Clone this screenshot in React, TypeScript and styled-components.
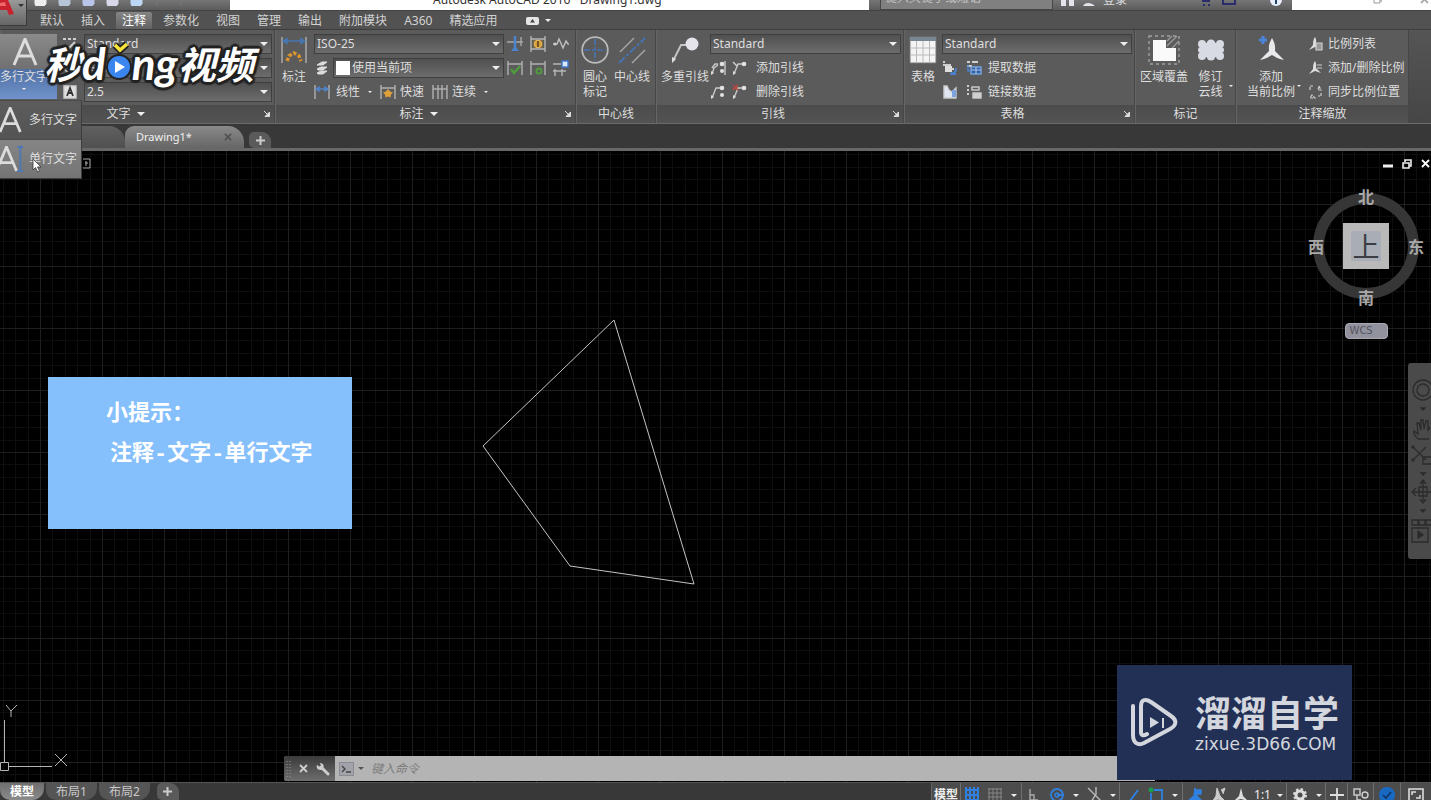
import React from "react";
import styled, { createGlobalStyle, css } from "styled-components";

const Global = createGlobalStyle`
  *, *::before, *::after { box-sizing: border-box; }
  body { margin: 0; background: #000; overflow: hidden; }
  button, input, select { font: inherit; color: inherit; margin: 0; }
  button { background: none; border: 0; padding: 0; cursor: default; white-space: nowrap; }
  svg { display: block; flex: none; }
`;

const Page = styled.div`
  position: relative;
  display: flex;
  flex-direction: column;
  height: 100vh;
  overflow: hidden;
  font: 12px/16px "Noto Sans", "Noto Sans CJK SC", sans-serif;
  color: #dedede;
`;

/* ---------- title bar ---------- */

const TitleBar = styled.header`
  display: flex;
  flex: none;
  height: 10px;
  overflow: hidden;
  background: linear-gradient(#757575, #5c5c5c);
`;

const QuickAccess = styled.div`
  display: flex;
  align-items: flex-end;
  gap: 11px;
  flex: none;
  width: 230px;
  padding: 0 0 4px 34px;
`;

const Caption = styled.h1`
  display: flex;
  align-items: flex-end;
  flex: 1;
  margin: 0;
  padding: 0 0 2px 203px;
  background: #fff;
  color: #333;
  font-size: 12px;
  font-weight: 400;
  line-height: 16px;
  white-space: pre;
`;

const InfoCenter = styled.div`
  display: flex;
  align-items: flex-end;
  flex: none;
  width: 423px;
  padding-left: 11px;
  gap: 8px;
`;

const SearchBox = styled.input`
  width: 173px;
  height: 20px;
  padding: 0 4px 6px;
  border: 1px solid #464646;
  background: #808080;
  font-size: 12px;
  &::placeholder { color: #c4c4c4; font-style: italic; opacity: 1; }
`;

const SignIn = styled.button`
  height: 20px;
  margin-right: 64px;
  line-height: 16px;
`;

const WindowButtons = styled.div`
  display: flex;
  justify-content: flex-end;
  align-items: flex-end;
  gap: 38px;
  flex: none;
  width: 139px;
  padding: 0 2px 6px 0;
  background: #fff;
`;

const AppButton = styled.button`
  position: absolute;
  left: 0;
  top: 0;
  width: 27px;
  height: 26px;
  border: solid #3a3a3a;
  border-width: 0 1px 1px 0;
  background: linear-gradient(#999, #666);
`;

/* ---------- ribbon ---------- */

const TabRow = styled.nav`
  display: flex;
  align-items: stretch;
  flex: none;
  gap: 5px;
  height: 19px;
  padding: 1px 0 0 34px;
  border-top: 1px solid #444;
  background: #525252;
`;

const RibbonTab = styled.button<{ $active?: boolean }>`
  padding: 0 6px;
  line-height: 17px;
  color: #d2d2d2;
  ${(p) =>
    p.$active &&
    css`
      border-radius: 2px 2px 0 0;
      background: linear-gradient(#858585, #636363);
      color: #fff;
    `}
`;

const TabTools = styled.button`
  display: flex;
  align-items: center;
  gap: 6px;
  margin-left: 18px;
`;

const Ribbon = styled.section`
  position: relative;
  display: flex;
  flex: none;
  height: 95px;
  border-top: 1px solid #3d3d3d;
  border-bottom: 1px solid #6a6a6a;
  background: linear-gradient(#555, #464646);
`;

const PanelBox = styled.div<{ $w: number }>`
  display: flex;
  flex-direction: column;
  flex: none;
  width: ${(p) => p.$w}px;
  border-right: 1px solid #474747;
  border-left: 1px solid #656565;
  background: #5b5b5b;
`;

const PanelBody = styled.div`
  display: flex;
  flex: 1;
  padding: 4px 2px 0 4px;
`;

const PanelTitle = styled.div<{ $inset: number }>`
  position: relative;
  display: flex;
  align-items: center;
  justify-content: center;
  gap: 6px;
  height: 18px;
  padding-right: ${(p) => p.$inset}px;
  background: linear-gradient(#4c4c4c, #535353);
`;

const Launcher = styled.button`
  position: absolute;
  right: 4px;
  top: 6px;
`;

const BigButton = styled.button<{ $w: number }>`
  position: relative;
  display: flex;
  flex-direction: column;
  align-items: center;
  flex: none;
  width: ${(p) => p.$w}px;
  height: 66px;
  line-height: 15px;
`;

const BigIcon = styled.span`
  display: flex;
  align-items: center;
  justify-content: center;
  height: 34px;
  margin-bottom: 1px;
  padding-bottom: 2px;
`;

const ButtonCaret = styled.span`
  position: absolute;
  right: 0;
  bottom: 13px;
`;

const Rows = styled.div<{ $pad?: number; $end?: number }>`
  display: flex;
  flex-direction: column;
  gap: 4px;
  flex: 1;
  padding: 0 ${(p) => p.$end ?? 0}px 0 ${(p) => p.$pad ?? 0}px;
`;

const Row = styled.div<{ $gap?: number }>`
  display: flex;
  align-items: center;
  gap: ${(p) => p.$gap ?? 6}px;
  height: 20px;
`;

const SmallButton = styled.button<{ $gap?: number }>`
  display: flex;
  align-items: center;
  gap: ${(p) => p.$gap ?? 4}px;
  height: 20px;
`;

const SelectWrap = styled.label`
  position: relative;
  display: flex;
  align-items: center;
  flex: 1;
  height: 20px;
  border: 1px solid #3f3f3f;
  background: linear-gradient(#505050, #6c6c6c);
  select {
    appearance: none;
    flex: 1;
    width: 100%;
    height: 18px;
    padding: 0 16px 0 2px;
    border: 0;
    background: transparent;
    outline: 0;
  }
  > svg { margin-right: 3px; position: absolute; right: 0; }
`;

const Swatch = styled.span`
  flex: none;
  width: 14px;
  height: 14px;
  margin-left: 2px;
  background: #fff;
`;

const TextSplit = styled.div`
  display: flex;
  flex-direction: column;
  flex: none;
  width: 57px;
  margin-left: -5px;
`;

const TextTop = styled.button`
  display: flex;
  justify-content: center;
  align-items: center;
  height: 35px;
  padding-right: 8px;
  background: linear-gradient(#8a8a8a, #707070);
`;

const TextBottom = styled.button`
  display: flex;
  flex-direction: column;
  align-items: center;
  gap: 3px;
  height: 30px;
  padding-right: 9px;
  background: linear-gradient(#4f6fa3, #6f93cb);
  line-height: 16px;
`;

const TextMenu = styled.div`
  position: absolute;
  left: 0;
  top: 100px;
  width: 82px;
  border: solid #3d3d3d;
  border-width: 0 1px 1px 0;
  background: #5a5a5a;
`;

const MenuItem = styled.button<{ $hot?: boolean }>`
  display: flex;
  align-items: center;
  gap: 5px;
  width: 100%;
  height: 39px;
  border-top: 1px solid #4a4a4a;
  background: ${(p) => (p.$hot ? "linear-gradient(#858585,#747474)" : "linear-gradient(#5c5c5c,#545454)")};
`;

const Pointer = styled.span`
  position: absolute;
  left: 32px;
  top: 58px;
`;

/* ---------- drawing tabs ---------- */

const FileTabs = styled.nav`
  display: flex;
  align-items: flex-end;
  flex: none;
  height: 27px;
  border-bottom: 3px solid #686868;
  background: #383838;
`;

const FileTab = styled.div<{ $active?: boolean; $w: number }>`
  display: flex;
  align-items: center;
  justify-content: space-between;
  width: ${(p) => p.$w}px;
  height: 22px;
  padding: 0 12px 0 11px;
  border-radius: 9px 16px 0 0;
  background: ${(p) => (p.$active ? "linear-gradient(#8a8a8a,#666)" : "linear-gradient(#606060,#505050)")};
  color: #f0f0f0;
  font-size: 11px;
`;

const AddTab = styled.button<{ $h: number }>`
  display: flex;
  align-items: center;
  justify-content: center;
  width: 22px;
  height: ${(p) => p.$h}px;
  margin-left: 5px;
  border-radius: 5px 9px 0 5px;
  background: #5a5a5a;
`;

/* ---------- canvas ---------- */

const Canvas = styled.main`
  position: relative;
  flex: 1;
  min-height: 0;
  overflow: hidden;
  background-color: #000;
  background-image: linear-gradient(90deg, #1f1f22 1px, transparent 1px), linear-gradient(#1f1f22 1px, transparent 1px),
    linear-gradient(90deg, transparent 12px, #0e0e0f 12px 13px, transparent 13px 25px, #0e0e0f 25px 26px, transparent 26px 37px, #0e0e0f 37px 38px, transparent 38px 50px, #0e0e0f 50px 51px, transparent 51px),
    linear-gradient(transparent 12px, #0e0e0f 12px 13px, transparent 13px 25px, #0e0e0f 25px 26px, transparent 26px 37px, #0e0e0f 37px 38px, transparent 38px 50px, #0e0e0f 50px 51px, transparent 51px);
  background-size: 62px 62px;
  background-position: 40px 53px;
`;

const Drawing = styled.svg`
  position: absolute;
  left: 0;
  top: 0;
  fill: none;
  stroke: #c4c4c4;
`;

const Ucs = styled.svg`
  position: absolute;
  left: 0;
  bottom: 10px;
  fill: none;
  stroke: #b5b5b5;
`;

const ViewTag = styled.span`
  position: absolute;
  left: 82px;
  top: 7px;
`;

const DocButtons = styled.div`
  position: absolute;
  right: 1px;
  top: 8px;
  display: flex;
  gap: 9px;
`;

const Tip = styled.aside`
  position: absolute;
  left: 48px;
  top: 226px;
  width: 304px;
  height: 152px;
  padding: 22px 0 0 58px;
  background: #85bffc;
  color: #fff;
  font: 700 22px/32px "Liberation Mono", "Noto Sans CJK SC", monospace;
  white-space: nowrap;
  p { margin: 0; }
  p + p { margin: 8px 0 0 4px; }
`;

const Compass = styled.div`
  position: absolute;
  right: 6px;
  top: 36px;
  display: flex;
  flex-direction: column;
  align-items: center;
  width: 118px;
`;

const Ring = styled.div`
  display: flex;
  align-items: center;
  justify-content: center;
  width: 106px;
  height: 106px;
  margin-top: 6px;
  border: 11px solid #363636;
  border-radius: 50%;
`;

const Face = styled.button`
  width: 46px;
  height: 46px;
  border: 8px solid #b9b9b9;
  background: #a9adb5;
  color: #3b3d42;
  font: 27px/28px "Noto Sans CJK SC", sans-serif;
  display: flex;
  align-items: center;
  justify-content: center;
`;

const Dir = styled.span<{ $x: number; $y: number }>`
  position: absolute;
  left: ${(p) => p.$x}px;
  top: ${(p) => p.$y}px;
  color: #a8a8a8;
  font: 700 16px/18px "Noto Sans CJK SC", sans-serif;
`;

const Wcs = styled.button`
  width: 43px;
  height: 16px;
  margin-top: 24px;
  padding-left: 4px;
  border: 1px solid #a9a9b4;
  border-radius: 4px;
  background: #92929e;
  color: #53535e;
  text-align: left;
  font: 10px/14px "DejaVu Sans", sans-serif;
`;

const NavBar = styled.div`
  position: absolute;
  right: 0;
  top: 212px;
  width: 23px;
  height: 196px;
  overflow: hidden;
  border-radius: 3px 0 0 3px;
  background: #4a4a4a;
`;

const CommandLine = styled.form`
  position: absolute;
  left: 284px;
  right: 276px;
  bottom: 1px;
  display: flex;
  height: 25px;
  border-radius: 3px 0 0 3px;
  overflow: hidden;
  background: #b4b4b4;
`;

const CommandGrip = styled.div`
  display: flex;
  align-items: center;
  gap: 8px;
  flex: none;
  width: 51px;
  padding-left: 2px;
  background: linear-gradient(#3a3a3a, #6e6e6e);
`;

const CommandPrompt = styled.span`
  display: flex;
  align-items: center;
  gap: 4px;
  padding: 0 7px 0 4px;
`;

const CommandInput = styled.input`
  flex: 1;
  min-width: 0;
  padding: 0;
  border: 0;
  outline: 0;
  background: transparent;
  &::placeholder { color: #7d7d7d; font-style: italic; opacity: 1; }
`;

const Brand = styled.div`
  position: absolute;
  right: 79px;
  bottom: 20px;
  z-index: 2;
  display: flex;
  align-items: center;
  gap: 17px;
  width: 235px;
  height: 115px;
  padding-left: 13px;
  background: #223056;
  color: #d3d6dc;
`;

const BrandName = styled.div`
  margin-bottom: 8px;
  font: 700 36px/34px "Noto Sans CJK SC", sans-serif;
  white-space: nowrap;
`;

const BrandUrl = styled.div`
  font: 17px/16px "DejaVu Sans", sans-serif;
  white-space: nowrap;
`;

/* ---------- status bar ---------- */

const StatusBar = styled.footer`
  display: flex;
  justify-content: space-between;
  flex: none;
  height: 18px;
  overflow: hidden;
  border-top: 1px solid #555;
  background: #383838;
`;

const LayoutTabs = styled.div`
  display: flex;
  gap: 2px;
`;

const LayoutTab = styled.button<{ $active?: boolean }>`
  height: 17px;
  padding: 0 10px;
  border-radius: 0 0 12px 10px;
  background: ${(p) => (p.$active ? "linear-gradient(#6f6f6f,#8b8b8b)" : "#555")};
  color: ${(p) => (p.$active ? "#fff" : "#c9c9c9")};
  font-weight: ${(p) => (p.$active ? 700 : 400)};
  font-size: 12px;
  line-height: 16px;
`;

const StatusTools = styled.div`
  display: flex;
  align-items: center;
  height: 24px;
  border-left: 1px solid #666;
  background: #4c4c4c;
`;

const StatusCell = styled.button<{ $w: number; $sep?: boolean; $strong?: boolean }>`
  display: flex;
  align-items: center;
  justify-content: center;
  width: ${(p) => p.$w}px;
  height: 24px;
  border-right: ${(p) => (p.$sep ? "1px solid #707070" : "0")};
  color: #f0f0f0;
  font-weight: ${(p) => (p.$strong ? 700 : 400)};
  font-size: 12px;
`;

/* ---------- video watermark ---------- */

const Watermark = styled.div`
  position: absolute;
  left: 44px;
  top: 38px;
  display: flex;
  align-items: center;
  height: 50px;
  color: #fff;
  font: italic 700 38px/50px "Noto Sans CJK SC", sans-serif;
  text-shadow: -3px 0 1px #222, 3px 0 1px #222, 0 -3px 1px #222, 0 3px 1px #222, 2px 2px 1px #222, -2px 2px 1px #222,
    2px -2px 1px #222, -2px -2px 1px #222;
  white-space: nowrap;
`;

const Latin = styled.span`
  font-family: Lato, sans-serif;
  font-size: 44px;
`;

/* ---------- icons ---------- */

const Caret = ({ s = 8, c = "#eee" }: { s?: number; c?: string }) => (
  <svg width={s} height={s / 2} viewBox="0 0 8 4"><path d="M0 0h8L4 4z" fill={c} /></svg>
);

const Plus = () => (
  <svg width="9" height="9" viewBox="0 0 9 9"><path d="M4.5 0v9M0 4.5h9" stroke="#ccc" strokeWidth="2" /></svg>
);

const Cross = ({ s = 9, c = "#ddd" }: { s?: number; c?: string }) => (
  <svg width={s} height={s} viewBox="0 0 9 9"><path d="M1 1l7 7M8 1L1 8" stroke={c} strokeWidth="1.8" /></svg>
);

const Ico = ({ children, w = 16, h = 16 }: { children: React.ReactNode; w?: number; h?: number }) => (
  <svg width={w} height={h} viewBox={`0 0 ${w} ${h}`} fill="none" stroke="#cfcfcf" strokeWidth="1.4">{children}</svg>
);

const DimIcon = () => (
  <Ico w={28} h={28}>
    <path d="M2 1v26M26 1v26" stroke="#a5a5a5" strokeWidth="1.6" />
    <path d="M3 5h22M3 5l4-2.5v5zM25 5l-4-2.5v5z" stroke="#4775b2" fill="#4775b2" />
    <path d="M7 25l2-5 5-3 5 3 2 5" stroke="#d9942e" strokeWidth="3.5" strokeDasharray="3.4 1.8" />
  </Ico>
);
const Linear = () => (
  <Ico><path d="M1 1v14M15 1v14" stroke="#b0b0b0" /><path d="M2 5h12M2 5l3-2v4zM14 5l-3-2v4z" stroke="#5084c8" fill="#5084c8" /></Ico>
);
const Quick = () => (
  <Ico><path d="M1 1v14M15 1v14M1 4h14" stroke="#b0b0b0" /><path d="M8 5l2 2.500 3 1-2 2-.5 3-2.500-1-2.500 1-.5-3-2-2 3-1z" fill="#e0a13b" stroke="none" /></Ico>
);
const Continue = () => (<Ico><path d="M1 1v14M6 1v14M10 1v14M15 1v14M1 5h14" stroke="#b0b0b0" /></Ico>);
const Break = () => (
  <Ico><path d="M0 6h16M14 1v9" stroke="#a8a8a8" /><path d="M8 0v15" stroke="#4b83ce" strokeWidth="2.400" /><path d="M4 15l4-5 4 5z" fill="#4b83ce" stroke="none" /></Ico>
);
const Inspect = () => (
  <Ico><path d="M1 0v16M15 0v16M1 3h14M1 13h14" stroke="#b5b5b5" /><rect x="3" y="4" width="10" height="8" fill="#7a6a40" stroke="none" /><circle cx="8" cy="8" r="3.500" fill="#d19a35" stroke="#e4b358" /><path d="M8 5v6" stroke="#4c3b1c" /></Ico>
);
const Jog = () => (<Ico><path d="M0 8h4l2-5 4 9 3-7 2 3h1" stroke="#c0c0c0" /><circle cx="2" cy="8" r="1.500" fill="#ccc" stroke="none" /></Ico>);
const UpdateDim = () => (<Ico><path d="M1 1v14M15 1v14M1 4h14" stroke="#b0b0b0" /><path d="M4 9l3 4 6-7" stroke="#4f9a3c" strokeWidth="2.600" /></Ico>);
const Reassoc = () => (<Ico><path d="M1 1v14M15 1v14M1 4h14" stroke="#b0b0b0" /><circle cx="9" cy="11" r="2.500" stroke="#4f9a3c" strokeWidth="2" /></Ico>);
const SpaceDim = () => (<Ico><path d="M0 4h8M2 9v7M9 9v7M0 11h13" stroke="#b5b5b5" /><rect x="9" y="1" width="6" height="6" fill="#dbe9ff" stroke="#3f7ad0" /></Ico>);
const Layers = () => (
  <Ico><path d="M3 5l5-3h5l-4 3zM3 9l4-2h6l-4 3H4zM3 13l4-2h6l-4 3H4z" fill="#ddd" stroke="#ddd" strokeWidth="1" /></Ico>
);
const CenterMark = () => (
  <Ico w={28} h={28}><circle cx="14" cy="14" r="12.800" stroke="#b9b9b9" strokeWidth="1.800" /><path d="M14 3v22M3 14h22" stroke="#4573b3" strokeDasharray="6 2 3 2" strokeWidth="1.600" /></Ico>
);
const CenterLine = () => (
  <Ico w={28} h={28}><path d="M2 16L16 2M14 27l13-13" stroke="#a8a8a8" /><path d="M1 27L27 2" stroke="#4573b3" strokeWidth="2" strokeDasharray="8 2 3 2" /></Ico>
);
const LeaderBig = () => (
  <Ico w={28} h={28}><path d="M2 25L10 9h9" stroke="#c7c7c7" strokeWidth="1.800" /><path d="M1 27v-6l4 2z" fill="#ddd" stroke="none" /><circle cx="21" cy="8" r="6.500" fill="#e4e4ea" stroke="none" /></Ico>
);
const LeaderSmall = ({ kind }: { kind: number }) => (
  <Ico>
    <path d={kind === 0 ? "M2 14l2-6 4-3M2 8l3-4h3M15 1v14" : "M2 14L6 4h6"} stroke="#c9c9c9" />
    <path d="M1 15v-4l3 2z" fill="#ddd" stroke="none" />
    <circle cx="12" cy="4" r="2.300" fill="#e2e2e2" stroke="none" />
    {kind < 2 && <circle cx="12" cy="11" r="2" fill="#e2e2e2" stroke="none" />}
    {kind === 2 && <path d="M1 2l4 4" />}
    {kind === 3 && <path d="M1 1l5 5M6 1L1 6" stroke="#c2463d" strokeWidth="1.600" />}
  </Ico>
);
const TableBig = () => (
  <Ico w={28} h={28}><path d="M1 1h26v26H1z" fill="#f4f4f4" stroke="#777" strokeWidth="1" /><path d="M1 1h26v4H1z" fill="#7a8592" stroke="none" /><path d="M1 12h26M1 19h26M7.500 5v22M14 5v22M20.500 5v22" stroke="#bababa" strokeWidth="1" /></Ico>
);
const DataIcon = ({ kind }: { kind: number }) => (
  <Ico>
    {kind === 0 && (<><path d="M1 2h2M1 5h7v4h4" strokeWidth="2" /><rect x="3" y="6" width="7" height="6" fill="#ddd" stroke="none" /><path d="M9 13c4 1 5-2 5-5M8 14h6" stroke="#4a82cf" strokeWidth="2" /></>)}
    {kind === 1 && (<><path d="M1 2h3M6 2h6M1 6h5" strokeWidth="2" /><rect x="5" y="7" width="10" height="7" stroke="#78a6e6" fill="#34619f" /><path d="M10 7v7M5 10h10" stroke="#a9c8f4" strokeWidth="1" /><path d="M2 5v6h3" stroke="#4a82cf" /></>)}
    {kind === 2 && (<><path d="M2 2v12h12V4l-4 4-3-2-2-4z" fill="#dfe6f2" stroke="#ccc" /><path d="M10 13V6h4v7z" fill="#7da4df" stroke="none" /></>)}
    {kind === 3 && (<><path d="M1 2h2M1 6h2M1 10h2" strokeWidth="2" /><rect x="6" y="3" width="7" height="3" /><rect x="7" y="9" width="8" height="5" fill="#d0d0d0" /></>)}
  </Ico>
);
const Wipeout = () => (
  <Ico w={32} h={30}><path d="M1 1h30v28H1z" stroke="#a0a0a0" strokeDasharray="3 3" /><path d="M19 11L29 1M24 13l7-7M19 6l5-5" stroke="#9a9a9a" /><path d="M5 5h13v8h10v13H5z" fill="#fafafa" stroke="none" /></Ico>
);
const Cloud = () => (
  <Ico w={28} h={22}>
    <g fill="#d9dbe4" stroke="none">
      <rect x="4" y="4" width="20" height="14" />
      <circle cx="5" cy="5" r="4" /><circle cx="14" cy="5" r="4.500" /><circle cx="23" cy="5" r="4" />
      <circle cx="4" cy="11" r="3" /><circle cx="24" cy="11" r="3" />
      <circle cx="5" cy="17" r="4" /><circle cx="14" cy="17" r="4.500" /><circle cx="23" cy="17" r="4" />
    </g>
  </Ico>
);
const AddScale = () => (
  <Ico w={28} h={30}><path d="M15 3c4 7 3 10 3 13l9 9c-6-1-8-3-12-5-4 2-6 4-12 5l9-9c0-3-1-6 3-13z" fill="#e9e9ec" stroke="none" /><path d="M6 1v8M2 5h8" stroke="#4a86dc" strokeWidth="3" /></Ico>
);
const ScaleIcon = ({ kind }: { kind: number }) => (
  <Ico w={14} h={14}>
    {kind < 2 ? (
      <><path d="M6 0c2 4 1 5 1 7l5 5-6-2-6 3 4-5c0-3 0-5 2-8z" fill="#dcdcdc" stroke="none" /><path d={kind === 0 ? "M7 6h6v7H7z" : "M8 4h5M8 7h5"} fill="#999" strokeWidth="1.200" /></>
    ) : (
      <><path d="M1 5V1h4M10 1l2 4H9zM3 10l-2 3h5zM12 8v3h-3" strokeDasharray="3 1" strokeWidth="1.200" /></>
    )}
  </Ico>
);
const LaunchIcon = () => (
  <svg width="6" height="6" viewBox="0 0 6 6"><path d="M0 0l4 4M5.500 1v4.500H1z" stroke="#ddd" fill="#ddd" /></svg>
);
const LetterA = ({ s = 24, bar }: { s?: number; bar?: boolean }) => (
  <svg width={s} height={s + 2} viewBox="0 0 26 28" fill="none" stroke="#dcdcdc" strokeWidth="3">
    <path d={bar ? "M-4 27L7 1l11 26M0 18h14" : s > 25 ? "M2 27L13 1l11 26M6 18h14" : "M0 27L11 1l11 26M4 18h14"} />
    {bar && <path d="M22 1v26M19 1h6M19 27h6" stroke="#4b78b8" strokeWidth="2" />}
  </svg>
);

/* ---------- parts ---------- */

const Picker = ({ value, label, swatch }: { value: string; label: string; swatch?: boolean }) => (
  <SelectWrap>
    {swatch && <Swatch />}
    <select aria-label={label} defaultValue={value}><option>{value}</option></select>
    <Caret />
  </SelectWrap>
);

const Panel = ({ w, title, caret, launch, inset = 0, children }: { w: number; title: string; caret?: boolean; launch?: boolean; inset?: number; children: React.ReactNode }) => (
  <PanelBox $w={w}>
    <PanelBody>{children}</PanelBody>
    <PanelTitle $inset={inset}>
      {title}
      {caret && <Caret />}
      {launch && <Launcher aria-label={`${title}设置`}><LaunchIcon /></Launcher>}
    </PanelTitle>
  </PanelBox>
);

const Big = ({ w, icon, lines, caret }: { w: number; icon: React.ReactNode; lines: string[]; caret?: boolean }) => (
  <BigButton $w={w}>
    <BigIcon>{icon}</BigIcon>
    {lines.map((l) => <span key={l}>{l}</span>)}
    {caret && <ButtonCaret><Caret s={4} /></ButtonCaret>}
  </BigButton>
);

const tabs = ["默认", "插入", "注释", "参数化", "视图", "管理", "输出", "附加模块", "A360", "精选应用"];

const blue = "#2f80e0";
const statusCells: { w: number; icon: React.ReactNode; sep?: boolean; strong?: boolean }[] = [
  { w: 29, icon: "模型", sep: true, strong: true },
  { w: 22, icon: <Ico><path d="M2 0v16M6 0v16M10 0v16M14 0v16M1 3h14M1 8h14M1 13h14" stroke={blue} strokeWidth="2" /></Ico> },
  { w: 24, icon: <Ico><path d="M2 1v14M6 1v14M10 1v14M14 1v14M1 2h14M1 6h14M1 10h14M1 14h14" stroke="#858585" strokeWidth="1" /></Ico> },
  { w: 15, icon: <Caret s={6} />, sep: true },
  { w: 22, icon: <Ico w={10} h={12}><path d="M2 0v11h8M2 6h4v5" stroke="#aaa" /></Ico> },
  { w: 26, icon: <Ico><circle cx="8" cy="8" r="6" stroke={blue} strokeWidth="1.800" /><circle cx="8" cy="8" r="2" stroke={blue} /><path d="M8 8h7" stroke={blue} strokeWidth="1.800" /></Ico> },
  { w: 12, icon: <Caret s={6} /> },
  { w: 25, icon: <Ico><path d="M1 1l13 13M9 0v7l-5 8" stroke="#bbb" /></Ico> },
  { w: 13, icon: <Caret s={6} />, sep: true },
  { w: 24, icon: <Ico><path d="M2 14h4L14 3" stroke={blue} strokeWidth="2" /></Ico> },
  { w: 24, icon: <Ico><path d="M3 6v8h11V3H6" stroke={blue} strokeWidth="1.800" /><circle cx="3" cy="3" r="2.500" fill="#1d9b4d" stroke="none" /></Ico> },
  { w: 15, icon: <Caret s={6} />, sep: true },
  { w: 24, icon: <Ico><path d="M8 1l2 8 5 5H1l6-5zM9 3h5v4H9z" fill={blue} stroke={blue} /></Ico> },
  { w: 23, icon: <Ico><path d="M6 1l3 8 5 5-7-2-6 3 4-6zM10 3l4-2-2 6" fill="#ccc" stroke="#ccc" strokeWidth="1" /></Ico> },
  { w: 21, icon: <Ico><path d="M8 1l2 8 5 5-7-2-7 2 5-5z" fill="#ddd" stroke="none" /></Ico> },
  { w: 23, icon: "1:1" },
  { w: 13, icon: <Caret s={6} />, sep: true },
  { w: 26, icon: <Ico><circle cx="8" cy="8" r="4" strokeWidth="3" stroke="#ddd" /><circle cx="8" cy="8" r="6" strokeWidth="2" strokeDasharray="2.400 2.300" stroke="#ddd" /></Ico> },
  { w: 13, icon: <Caret s={6} />, sep: true },
  { w: 22, icon: <Ico><path d="M8 1v14M1 8h14" stroke="#ddd" strokeWidth="1.800" /></Ico>, sep: true },
  { w: 26, icon: <Ico><rect x="1" y="2" width="6" height="6" /><circle cx="12" cy="8" r="3" /><path d="M4 8v5h4" /></Ico>, sep: true },
  { w: 27, icon: <Ico><circle cx="8" cy="8" r="8" fill="#1769c4" stroke="none" /><path d="M4 8l3 3 5-6" stroke="#10355f" strokeWidth="1.600" /></Ico>, sep: true },
  { w: 30, icon: <Ico><path d="M1 2h14v12H1zM4 8V5h4M12 8v3H8" stroke="#ddd" strokeWidth="1.600" /></Ico> },
];

export default function App() {
  return (
    <Page>
      <Global />
      <TitleBar>
        <QuickAccess>
          {["#eee", "#b8c4d8", "#b8c4e8", "#d8d8e8", "#bcd6f4", "#777", "#777"].map((c, i) => (
            <svg key={i} width="13" height="8" viewBox="0 0 13 8"><path d={i < 5 ? "M1 0h11v6l-2 2H2L1 6z" : "M2 8l3-6 4 2"} fill={i < 5 ? c : "none"} stroke={c} /></svg>
          ))}
        </QuickAccess>
        <Caption>Autodesk AutoCAD 2016   Drawing1.dwg</Caption>
        <InfoCenter>
          <SearchBox aria-label="搜索" placeholder="键入关键字或短语" />
          <svg width="34" height="10" viewBox="0 0 34 10"><path d="M0 0h5v6H0zM8 0h5v6H8zM22 6c2-4 8-4 12 0z" fill="#e4e4ec" /></svg>
          <SignIn>登录</SignIn>
          <svg width="84" height="10" viewBox="0 0 84 10"><path d="M3 1h8M4 5h2M9 5h2M24 0v4h12V0" stroke="#2b2d6b" strokeWidth="2" fill="none" /><circle cx="77" cy="0" r="6" fill="#e8eefa" /><path d="M77 0v4" stroke="#246" strokeWidth="2" /></svg>
        </InfoCenter>
        <WindowButtons>
          <svg width="9" height="9" viewBox="0 0 9 9"><path d="M1 2v6h6V2M7 6h2V0" stroke="#999" fill="none" /></svg>
          <Cross c="#aaa" />
        </WindowButtons>
      </TitleBar>

      <TabRow>
        {tabs.map((t) => <RibbonTab key={t} $active={t === "注释"}>{t}</RibbonTab>)}
        <TabTools aria-label="功能区显示">
          <svg width="13" height="8" viewBox="0 0 13 8"><rect width="13" height="8" rx="2" fill="#e6e6e6" /><path d="M4 5.500L6.500 2 9 5.500z" fill="#444" /></svg>
          <Caret s={6} />
        </TabTools>
      </TabRow>

      <Ribbon>
        <Panel w={275} title="文字" caret launch inset={24}>
          <TextSplit>
            <TextTop aria-label="多行文字"><LetterA s={26} /></TextTop>
            <TextBottom>多行文字<Caret s={4} /></TextBottom>
          </TextSplit>
          <Rows $pad={5}>
            <Row><Ico><path d="M1 3h3M6 3h3M11 3h3M2 11l3 3 8-8" strokeWidth="2" /></Ico><Picker label="文字样式" value="Standard" /></Row>
            <Row><Ico><circle cx="7" cy="7" r="5" /></Ico><Picker label="查找文字" value="查找文字" /></Row>
            <Row><Ico><path d="M2 2h12v12H2z" fill="#e0e0e0" /><path d="M5 12l3-8 3 8M6 9h4" stroke="#333" strokeWidth="1.800" /></Ico><Picker label="文字高度" value="2.5" /></Row>
          </Rows>
        </Panel>

        <Panel w={301} title="标注" caret launch inset={14}>
          <Big w={28} icon={<DimIcon />} lines={["标注"]} />
          <Rows $pad={6} $end={4}>
            <Row $gap={3}><Picker label="标注样式" value="ISO-25" /><Row $gap={7}><Break /><Inspect /><Jog /></Row></Row>
            <Row $gap={3}><Layers /><Picker label="标注图层" value="使用当前项" swatch /><Row $gap={7}><UpdateDim /><Reassoc /><SpaceDim /></Row></Row>
            <Row $gap={8}>
              <SmallButton $gap={6}><Linear />线性</SmallButton><Caret s={4} />
              <SmallButton><Quick />快速</SmallButton>
              <SmallButton><Continue />连续</SmallButton><Caret s={4} />
            </Row>
          </Rows>
        </Panel>

        <Panel w={80} title="中心线">
          <Big w={28} icon={<CenterMark />} lines={["圆心", "标记"]} />
          <Big w={46} icon={<CenterLine />} lines={["中心线"]} />
        </Panel>

        <Panel w={248} title="引线" launch inset={14}>
          <Big w={48} icon={<LeaderBig />} lines={["多重引线"]} />
          <Rows $pad={1}>
            <Row><Picker label="引线样式" value="Standard" /></Row>
            <Row><LeaderSmall kind={0} /><SmallButton $gap={8}><LeaderSmall kind={2} />添加引线</SmallButton></Row>
            <Row><LeaderSmall kind={1} /><SmallButton $gap={8}><LeaderSmall kind={3} />删除引线</SmallButton></Row>
          </Rows>
        </Panel>

        <Panel w={231} title="表格" launch inset={14}>
          <Big w={28} icon={<TableBig />} lines={["表格"]} />
          <Rows $pad={5}>
            <Row><Picker label="表格样式" value="Standard" /></Row>
            <Row $gap={8}><DataIcon kind={0} /><SmallButton $gap={6}><DataIcon kind={1} />提取数据</SmallButton></Row>
            <Row $gap={8}><DataIcon kind={2} /><SmallButton $gap={6}><DataIcon kind={3} />链接数据</SmallButton></Row>
          </Rows>
        </Panel>

        <Panel w={101} title="标记">
          <Big w={48} icon={<Wipeout />} lines={["区域覆盖"]} />
          <Big w={45} icon={<Cloud />} lines={["修订", "云线"]} caret />
        </Panel>

        <Panel w={173} title="注释缩放">
          <Big w={60} icon={<AddScale />} lines={["添加", "当前比例"]} caret />
          <Rows $pad={8}>
            {["比例列表", "添加/删除比例", "同步比例位置"].map((t, i) => (
              <SmallButton key={t} $gap={5}><ScaleIcon kind={i} />{t}</SmallButton>
            ))}
          </Rows>
        </Panel>
      </Ribbon>

      <FileTabs>
        <FileTab $w={125} />
        <FileTab $w={119} $active>Drawing1*<Cross s={8} c="#505050" /></FileTab>
        <AddTab $h={16} aria-label="新建图形"><Plus /></AddTab>
      </FileTabs>

      <Canvas>
        <Drawing width="800" height="500"><path d="M614 169L483 295L570 415L694 433Z" /></Drawing>
        <ViewTag><svg width="10" height="11" viewBox="0 0 10 11"><path d="M1 1h7v9H1M4 3v5M3 5h3" stroke="#aaa" fill="none" /></svg></ViewTag>
        <DocButtons>
          <svg width="10" height="10" viewBox="0 0 10 10"><path d="M0 7h10" stroke="#eee" strokeWidth="3" /></svg>
          <svg width="10" height="10" viewBox="0 0 10 10"><path d="M1 4h6v5H1zM3 3V1h6v6H7" stroke="#eee" strokeWidth="1.600" fill="none" /></svg>
          <Cross c="#fff" />
        </DocButtons>

        <Tip><p>小提示：</p><p>注释-文字-单行文字</p></Tip>

        <Compass>
          <Ring><Face>上</Face></Ring>
          <Dir $x={51} $y={0}>北</Dir>
          <Dir $x={1} $y={50}>西</Dir>
          <Dir $x={101} $y={50}>东</Dir>
          <Dir $x={51} $y={101}>南</Dir>
          <Wcs>WCS</Wcs>
        </Compass>

        <NavBar>
          <svg width="23" height="196" viewBox="0 0 23 196" fill="none" stroke="#2b2b2b" strokeWidth="1.300">
            <circle cx="15" cy="27" r="10" /><circle cx="15" cy="27" r="6" />
            <path d="M13 45h4l-2 2zM13 110h4l-2 2zM13 147h4l-2 2z" fill="#2b2b2b" />
            <path d="M10 76c-3-3-5-6-4-8l4 3-1-11 2 0 2 7v-10h2l1 9 2-8h2v10l2-4M10 76h11" />
            <path d="M5 84l13 13M18 84L5 97M15 94h9v7h-9z" /><circle cx="5" cy="84" r="1" /><circle cx="5" cy="97" r="1" />
            <path d="M15 118v20M5 129h18M12 121l3-4 3 4M12 136l3 4 3-4M8 125l-4 4 4 4M11 124h8v9h-8z" />
            <path d="M4 157h6v5H4zM11 157h6v5h-6zM18 157h6v5h-6zM4 165h16v14H4z" /><path d="M10 168v7l5-3z" fill="#2b2b2b" />
          </svg>
        </NavBar>

        <Ucs width="70" height="72" viewBox="0 0 70 72">
          <path d="M4.500 20v42M8 66.500h44M.5 62.500h8v8h-8z" />
          <path d="M6 5l5 6 6-6M11 11v6M55 54l12 12M67 54L55 66" />
        </Ucs>

        <CommandLine onSubmit={(e) => e.preventDefault()}>
          <CommandGrip>
            <svg width="5" height="16" viewBox="0 0 5 16"><path d="M1 0v16M4 0v16" stroke="#999" strokeDasharray="1 2" /></svg>
            <Cross c="#ccc" />
            <svg width="14" height="14" viewBox="0 0 14 14"><path d="M5 5l7 7" stroke="#ccc" strokeWidth="3" strokeLinecap="round" /><path d="M1 3a3.500 3.500 0 1 0 3-2l1 3-1 1z" fill="#ccc" /></svg>
          </CommandGrip>
          <CommandPrompt>
            <svg width="15" height="14" viewBox="0 0 15 14"><rect x=".5" y=".5" width="14" height="13" fill="#a2a2aa" stroke="#8b8b93" /><path d="M3 4l3 3-3 3M7 10h5" stroke="#444" fill="none" strokeWidth="1.400" /></svg>
            <Caret s={6} c="#555" />
          </CommandPrompt>
          <CommandInput aria-label="命令" placeholder="键入命令" />
        </CommandLine>
      </Canvas>

      <StatusBar>
        <LayoutTabs>
          <LayoutTab $active>模型</LayoutTab>
          <LayoutTab>布局1</LayoutTab>
          <LayoutTab>布局2</LayoutTab>
          <AddTab $h={17} aria-label="新建布局"><Plus /></AddTab>
        </LayoutTabs>
        <StatusTools>
          {statusCells.map((c, i) => <StatusCell key={i} $w={c.w} $sep={c.sep} $strong={c.strong}>{c.icon}</StatusCell>)}
        </StatusTools>
      </StatusBar>

      <Brand>
        <svg width="48" height="52" viewBox="0 0 48 52" fill="none" stroke="#d3d6dc" strokeWidth="4" strokeLinecap="round" strokeLinejoin="round">
          <path d="M3 9v29c0 8 5 11 11 8l26-14c7-4 7-9 1-13L21 5c-6-4-10-2-10 4v26c0 4 3 4 6 2" />
          <path d="M20 20v11l9-5.500z" fill="#d3d6dc" stroke="none" /><path d="M33 21v10" strokeWidth="2" strokeLinecap="butt" />
        </svg>
        <div>
          <BrandName>溜溜自学</BrandName>
          <BrandUrl>zixue.3D66.COM</BrandUrl>
        </div>
      </Brand>

      <AppButton aria-label="应用程序菜单">
        <svg width="26" height="25" viewBox="0 0 26 25"><path d="M0 0h8l6 14-5 1-2-5H0z" fill="#c8222e" /><path d="M0 3l5-1 1 4H0z" fill="#e66" /><path d="M18 4h6l-3 3z" fill="#333" /></svg>
      </AppButton>

      <TextMenu>
        <MenuItem><LetterA />多行文字</MenuItem>
        <MenuItem $hot><LetterA bar />单行文字</MenuItem>
        <Pointer><svg width="10" height="15" viewBox="0 0 10 15"><path d="M1 1v11l2.500-2.500L5.500 14l2-1-2-4H9z" fill="#fff" stroke="#333" strokeWidth=".8" /></svg></Pointer>
      </TextMenu>

      <Watermark>
        <span>秒</span>
        <Latin>d</Latin>
        <svg width="26" height="50" viewBox="0 0 26 50"><path d="M9 7l5 5 7-6" stroke="#222" strokeWidth="7" fill="none" /><path d="M9 7l5 5 7-6" stroke="#f7e43b" strokeWidth="3.500" fill="none" /><circle cx="13" cy="29" r="13" fill="#222" /><circle cx="13" cy="29" r="11" fill="#3a86ee" /><path d="M9 23v12l10-6z" fill="#fff" /></svg>
        <Latin>ng</Latin>
        <span>视频</span>
      </Watermark>
    </Page>
  );
}
